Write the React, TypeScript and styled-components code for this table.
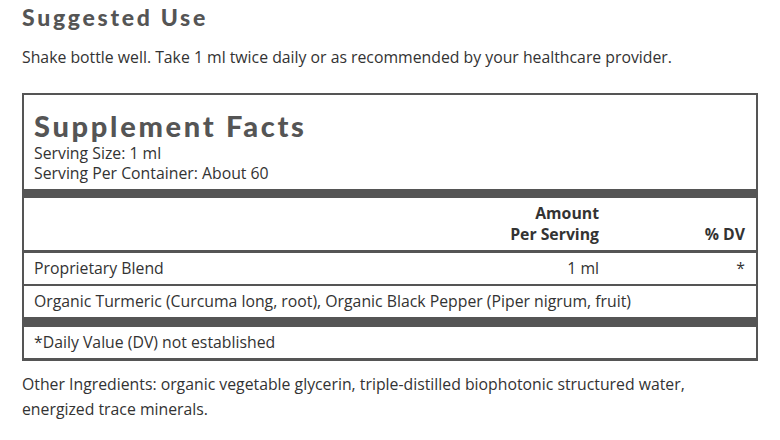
import React from "react";
import styled, { createGlobalStyle } from "styled-components";

const Global = createGlobalStyle`
  html, body { margin: 0; padding: 0; background: #fff; }
  body { font-family: "Open Sans", "Noto Sans", sans-serif; color: #333; }
`;

const Page = styled.div`
  padding: 2px 22px 0 22px;
  width: 736px;
`;

const Heading = styled.h2`
  margin: 0;
  font-family: "Lato", sans-serif;
  font-weight: 900;
  font-size: 23px;
  line-height: 30px;
  color: #555;
  letter-spacing: 2.7px;
`;

const Para = styled.p<{ $lh?: number; $mt?: number }>`
  margin: ${(p) => p.$mt ?? 0}px 0 0 0;
  font-size: 15.8px;
  line-height: ${(p) => p.$lh ?? 25}px;
  color: #333;
`;

const Facts = styled.div`
  margin-top: 11px;
  border: 2px solid #555;
  border-bottom-width: 3px;
`;

const FactsHead = styled.div`
  padding: 14px 10px 6px 10px;
`;

const FactsTitle = styled.h3`
  margin: 0;
  font-family: "Lato", sans-serif;
  font-weight: 900;
  font-size: 29px;
  line-height: 34px;
  color: #555;
  letter-spacing: 2.7px;
`;

const Info = styled.div`
  font-size: 15.8px;
  line-height: 20px;
  color: #333;
`;

const Table = styled.table`
  width: 100%;
  border-collapse: collapse;
  font-size: 15.8px;
  color: #333;
`;

const Row = styled.tr<{ $top: number }>`
  border-top: ${(p) => p.$top}px solid #555;
`;

const Cell = styled.td<{ $align?: string; $bold?: boolean; $w?: string }>`
  padding: 0 11px 0 10px;
  text-align: ${(p) => p.$align ?? "left"};
  font-weight: ${(p) => (p.$bold ? 700 : 400)};
  vertical-align: bottom;
  line-height: 20px;
  ${(p) => (p.$w ? `width: ${p.$w};` : "")}
`;

const HeadCell = styled(Cell)`
  padding-top: 5px;
  padding-bottom: 5px;
  line-height: 21px;
`;

const BodyCell = styled(Cell)`
  padding-top: 5px;
  padding-bottom: 5px;
  line-height: 21px;
`;

export default function App() {
  return (
    <>
      <Global />
      <Page>
        <Heading>Suggested Use</Heading>
        <Para $lh={50}>
          Shake bottle well. Take 1 ml twice daily or as recommended by your healthcare provider.
        </Para>
        <Facts>
          <FactsHead>
            <FactsTitle>Supplement Facts</FactsTitle>
            <Info>Serving Size: 1 ml</Info>
            <Info>Serving Per Container: About 60</Info>
          </FactsHead>
          <Table>
            <tbody>
              <Row $top={9}>
                <HeadCell />
                <HeadCell $align="right" $bold>
                  Amount
                  <br />
                  Per Serving
                </HeadCell>
                <HeadCell $align="right" $bold $w="125px">
                  % DV
                </HeadCell>
              </Row>
              <Row $top={3}>
                <BodyCell>Proprietary Blend</BodyCell>
                <BodyCell $align="right">1 ml</BodyCell>
                <BodyCell $align="right">*</BodyCell>
              </Row>
              <Row $top={2}>
                <BodyCell colSpan={3}>
                  Organic Turmeric (Curcuma long, root), Organic Black Pepper (Piper nigrum, fruit)
                </BodyCell>
              </Row>
              <Row $top={10}>
                <BodyCell colSpan={3}>*Daily Value (DV) not established</BodyCell>
              </Row>
            </tbody>
          </Table>
        </Facts>
        <Para $mt={11}>
          Other Ingredients: organic vegetable glycerin, triple-distilled biophotonic structured water,
          energized trace minerals.
        </Para>
      </Page>
    </>
  );
}
